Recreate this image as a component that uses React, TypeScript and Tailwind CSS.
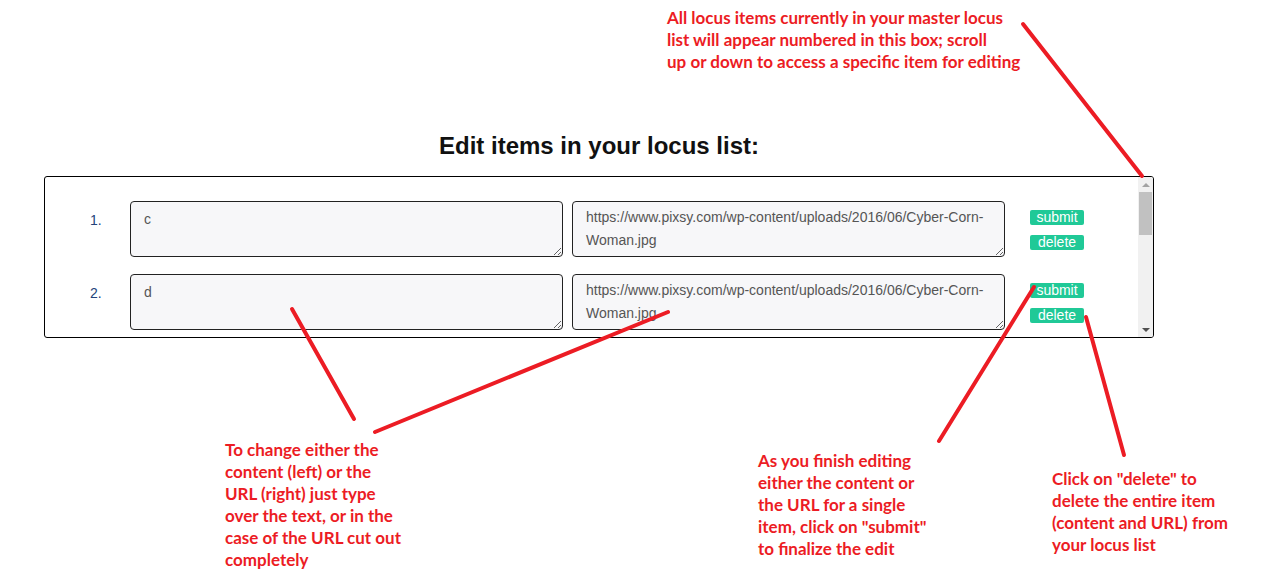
const url = "https://www.pixsy.com/wp-content/uploads/2016/06/Cyber-Corn-Woman.jpg";

const items = [
  { id: 1, content: "c", url },
  { id: 2, content: "d", url },
];

const note = "font-['Lato',sans-serif] font-bold text-[17px] leading-[22px] text-[#ec1c24]";

function Row({ n, content, link }: { n: number; content: string; link: string }) {
  return (
    <li className="flex items-start">
      <div className="w-[85px] pl-[45px] pt-[9px] text-[14px] leading-[20px] text-[#24437a]">{n}.</div>
      <textarea
        defaultValue={content}
        className="h-[56px] w-[433px] resize-y rounded-[4px] border border-[#222] bg-[#f7f7f9] px-[13px] py-[6px] text-[14px] leading-[23px] text-[#555] outline-none"
      />
      <textarea
        defaultValue={link}
        className="ml-[9px] h-[56px] w-[433px] resize-y rounded-[4px] border border-[#222] bg-[#f7f7f9] px-[13px] py-[4px] text-[14px] leading-[23px] text-[#555] outline-none"
      />
      <div className="ml-[25px] flex flex-col gap-[10px] pt-[9px]">
        <button className="h-[15px] w-[54px] rounded-[2px] bg-[#20c997] text-[14px] leading-[15px] text-white">submit</button>
        <button className="h-[15px] w-[54px] rounded-[2px] bg-[#20c997] text-[14px] leading-[15px] text-white">delete</button>
      </div>
    </li>
  );
}

function Scrollbar() {
  return (
    <div className="flex w-[15px] flex-col bg-[#f1f1f1]">
      <div className="flex h-[15px] items-center justify-center">
        <div className="h-0 w-0 border-x-[4px] border-b-[4px] border-x-transparent border-b-[#a3a3a3]" />
      </div>
      <div className="flex-1 px-[1px]">
        <div className="h-[43px] bg-[#c1c1c1]" />
      </div>
      <div className="flex h-[15px] items-center justify-center">
        <div className="h-0 w-0 border-x-[4px] border-t-[4px] border-x-transparent border-t-[#505050]" />
      </div>
    </div>
  );
}

export default function App() {
  return (
    <div className="relative h-[576px] w-[1268px] overflow-hidden bg-white font-['Liberation_Sans',Arial,sans-serif]">
      <div className={`${note} pl-[667px] pt-[7px]`}>
        <p>All locus items currently in your master locus</p>
        <p>list will appear numbered in this box; scroll</p>
        <p>up or down to access a specific item for editing</p>
      </div>

      <h2 className="mt-[57px] w-[1198px] text-center text-[24px] font-bold leading-[32px] text-[#111]">
        Edit items in your locus list:
      </h2>

      <div className="ml-[44px] mt-[14px] flex h-[162px] w-[1110px] overflow-hidden rounded-[3px] border border-black">
        <div className="flex-1 overflow-hidden">
          <ol className="flex flex-col gap-[17px] pt-[24px]">
            {items.map((it) => (
              <Row key={it.id} n={it.id} content={it.content} link={it.url} />
            ))}
          </ol>
        </div>
        <Scrollbar />
      </div>

      <div className="flex items-start">
        <div className={`${note} ml-[225px] mt-[101px] w-[200px]`}>
          <p>To change either the</p>
          <p>content (left) or the</p>
          <p>URL (right) just type</p>
          <p>over the text, or in the</p>
          <p>case of the URL cut out</p>
          <p>completely</p>
        </div>
        <div className={`${note} ml-[333px] mt-[112px] w-[200px]`}>
          <p>As you finish editing</p>
          <p>either the content or</p>
          <p>the URL for a single</p>
          <p>item, click on "submit"</p>
          <p>to finalize the edit</p>
        </div>
        <div className={`${note} ml-[94px] mt-[130px] w-[210px]`}>
          <p>Click on "delete" to</p>
          <p>delete the entire item</p>
          <p>(content and URL) from</p>
          <p>your locus list</p>
        </div>
      </div>

      <svg className="pointer-events-none absolute inset-0" width="1268" height="576">
        <g stroke="#ec1c24" strokeWidth="4" strokeLinecap="round">
          <line x1="1023" y1="24" x2="1142" y2="176" />
          <line x1="292" y1="309" x2="354" y2="419" />
          <line x1="668" y1="312" x2="375" y2="432" />
          <line x1="1034" y1="287" x2="939" y2="441" />
          <line x1="1086" y1="317" x2="1124" y2="455" />
        </g>
      </svg>
    </div>
  );
}
